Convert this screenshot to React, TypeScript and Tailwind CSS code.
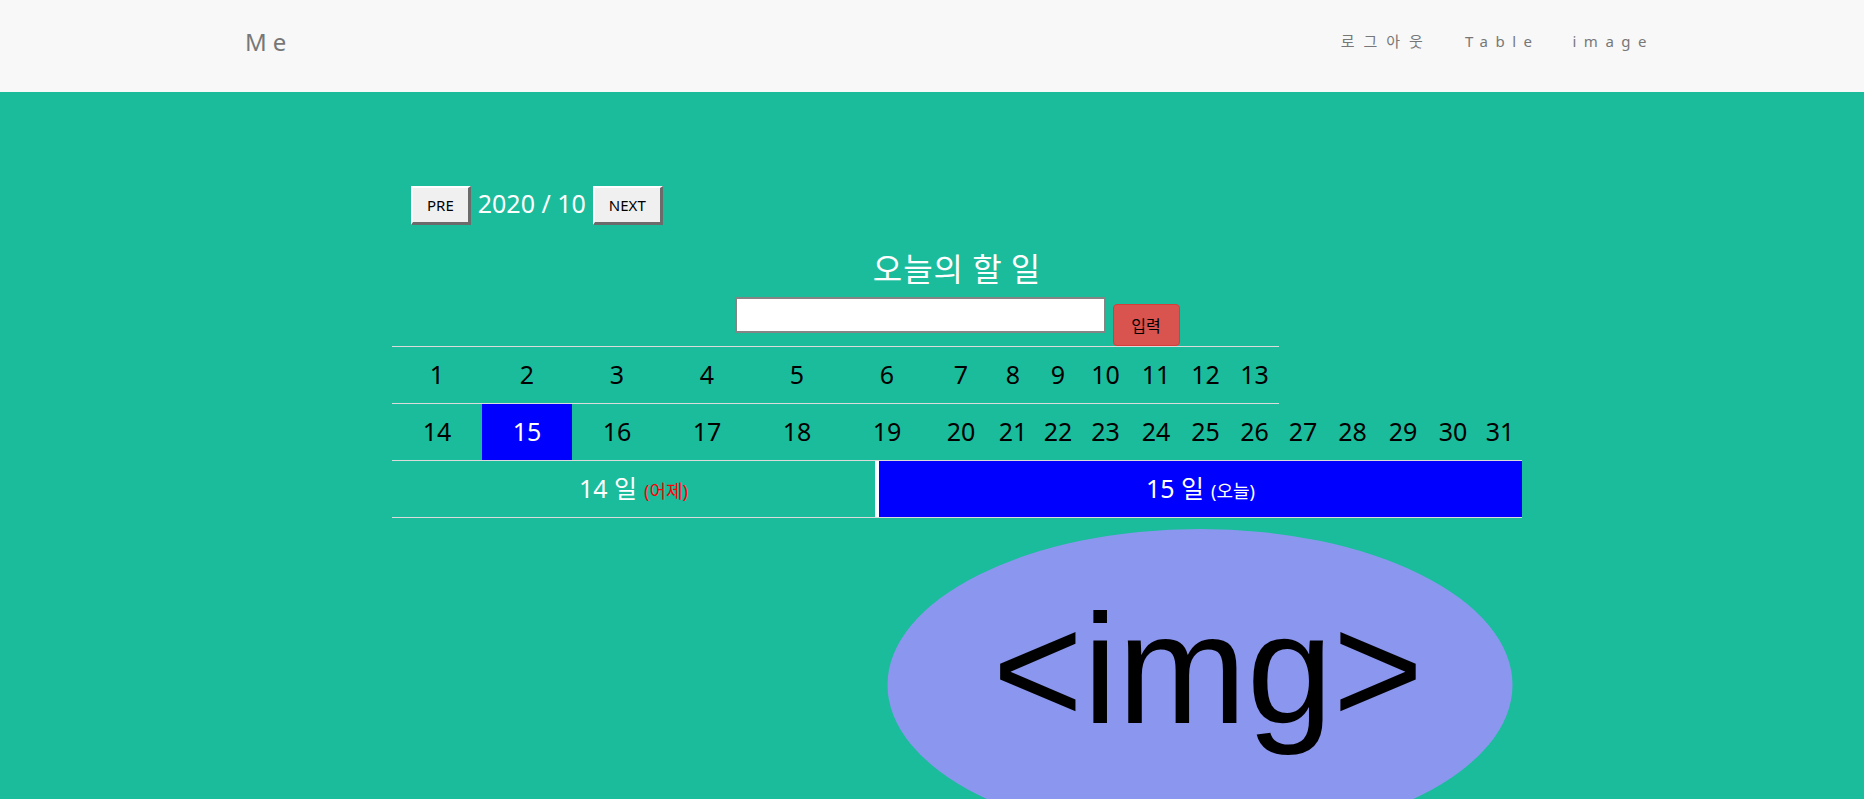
import React from "react";

const row1 = [1, 2, 3, 4, 5, 6, 7, 8, 9, 10, 11, 12, 13];
const row2 = [14, 15, 16, 17, 18, 19, 20, 21, 22, 23, 24, 25, 26, 27, 28, 29, 30, 31];
const widths = ["w-[90px]", "w-[90px]", "w-[90px]", "w-[90px]", "w-[90px]", "w-[90px]", "w-[58px]", "w-[46px]", "w-[44px]", "w-[51px]", "w-[50px]", "w-[49px]", "w-[49px]", "w-[48px]", "w-[51px]", "w-[50px]", "w-[50px]", "w-[44px]"];

function Cell({ n, i, active }: { n: number; i: number; active?: boolean }) {
  return (
    <div
      className={`${widths[i]} h-[57px] border-b border-[#dcdcdc] flex items-center justify-center text-[25px] ${active ? "bg-[#0000ff] text-white" : "text-black"}`}
    >
      {n}
    </div>
  );
}

function OldButton({ label }: { label: string }) {
  return (
    <button className="h-[39px] px-[14px] bg-[#f0f0f0] text-[15px] text-black border-t-2 border-l-2 border-t-white border-l-white border-r-[3px] border-b-[3px] border-r-[#6b6b6b] border-b-[#6b6b6b] leading-none">
      {label}
    </button>
  );
}

export default function App() {
  return (
    <div className="min-h-screen bg-[#1abc9c] font-['Noto_Sans','Noto_Sans_CJK_KR',sans-serif] overflow-hidden">
      <header className="h-[92px] bg-[#f8f8f8] flex items-center">
        <div className="w-full flex items-center pl-[245px] pr-[210px]">
          <span className="text-[24px] tracking-[6px] text-[#777] leading-none -mt-[8px]">Me</span>
          <nav className="ml-auto flex items-center gap-[33px] text-[15px] tracking-[7.5px] text-[#777] leading-none -mt-[9px]">
            <span className="tracking-[9px]">로그아웃</span>
            <span>Table</span>
            <span>image</span>
          </nav>
        </div>
      </header>

      <main className="pl-[392px]">
        <div className="w-[1130px]">
          <div className="pt-[94px] pl-[19px] flex items-center h-[133px] box-border">
            <OldButton label="PRE" />
            <span className="text-white text-[25px] mx-[7px] leading-none -mt-[4px]">2020 / 10</span>
            <OldButton label="NEXT" />
          </div>

          <div className="mt-[23px] h-[38px] leading-[38px] text-center text-white text-[32px] tracking-[1px] font-['Noto_Sans_CJK_KR',sans-serif]">
            오늘의 할 일
          </div>

          <div className="mt-[11px] h-[49px] flex justify-center items-start">
            <input className="w-[371px] h-[36px] bg-white border-2 border-[#858585] outline-none" />
            <button className="ml-[7px] mt-[7px] w-[67px] h-[42px] bg-[#d9534f] border border-[#d43f3a] rounded-[4px] text-black text-[16px] font-['Noto_Sans_CJK_KR',sans-serif]">
              입력
            </button>
          </div>

          <div className="flex border-t border-[#dcdcdc] w-[887px]">
            {row1.map((n, i) => (
              <Cell key={n} n={n} i={i} />
            ))}
          </div>
          <div className="flex">
            {row2.map((n, i) => (
              <Cell key={n} n={n} i={i} active={n === 15} />
            ))}
          </div>
          <div className="flex h-[57px]">
            <div className="w-[483px] border-b border-[#dcdcdc] flex items-center justify-center text-white">
              <span className="text-[25px]">14 일</span>
              <span className="text-[18px] text-[#ff0000] ml-[7px] mt-[4px]">(어제)</span>
            </div>
            <div className="w-[4px] bg-white border-b border-[#dcdcdc]" />
            <div className="w-[643px] bg-[#0000ff] border-b border-[#dcdcdc] flex items-center justify-center text-white">
              <span className="text-[25px]">15 일</span>
              <span className="text-[18px] ml-[7px] mt-[4px]">(오늘)</span>
            </div>
          </div>

          <div className="flex justify-end">
            <svg width="643" height="282" viewBox="0 0 643 282" className="block">
              <ellipse cx="321" cy="167" rx="312.5" ry="156" fill="#8b97ef" />
              <text
                x="329"
                y="205"
                textAnchor="middle"
                fontSize="155"
                fontFamily="'Liberation Sans', Arial, sans-serif"
                fill="#000"
              >
                &lt;img&gt;
              </text>
            </svg>
          </div>
        </div>
      </main>
    </div>
  );
}
